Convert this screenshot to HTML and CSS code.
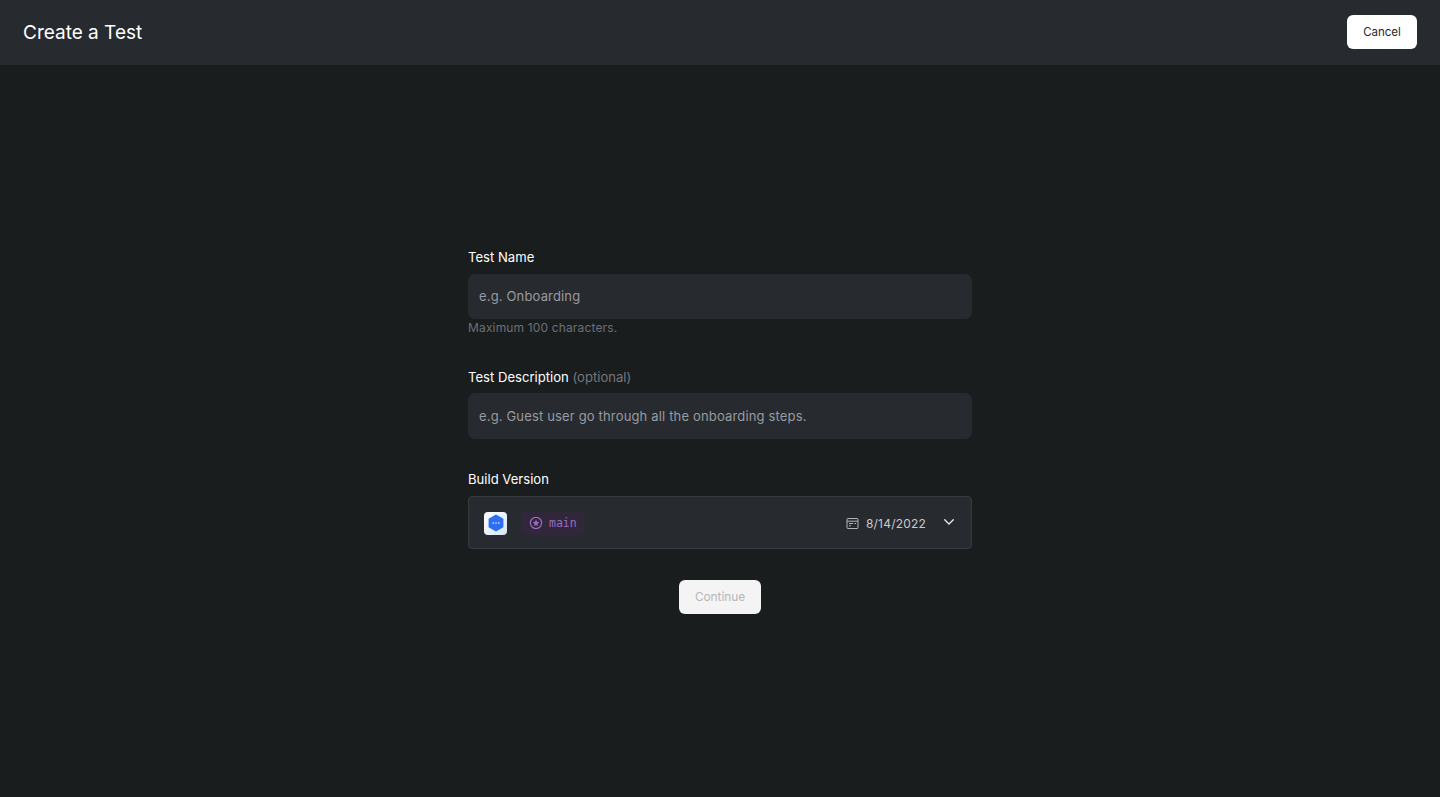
FILE: index.html
```html
<!DOCTYPE html>
<html lang="en">
<head>
<meta charset="utf-8">
<title>Create a Test</title>
<link rel="stylesheet" href="styles.css">
</head>
<body>
<header class="topbar">
  <h1 class="title">Create a Test</h1>
  <button class="btn" type="button">Cancel</button>
</header>
<main class="main">
  <form class="form">
    <div class="field first">
      <label class="label">Test Name</label>
      <div class="input short">e.g. Onboarding</div>
      <p class="hint">Maximum 100 characters.</p>
    </div>
    <div class="field second">
      <label class="label">Test Description <span class="opt">(optional)</span></label>
      <div class="input tall">e.g. Guest user go through all the onboarding steps.</div>
    </div>
    <div class="field third">
      <label class="label">Build Version</label>
      <div class="select">
        <span class="appicon">
          <svg width="16" height="18" viewBox="0 0 16 18"><path d="M8 0.5 15.4 4.7v8.6L8 17.5.6 13.3V4.7z" fill="#2b6ff7"/><circle cx="5.2" cy="9" r=".8" fill="#fff"/><circle cx="8" cy="9" r=".8" fill="#fff"/><circle cx="10.8" cy="9" r=".8" fill="#fff"/></svg>
        </span>
        <span class="branch">
          <svg width="14" height="14" viewBox="0 0 14 14"><circle cx="7" cy="7" r="5.6" fill="none" stroke="#9a6bc2" stroke-width="1.2"/><path d="M7 3.7l1 2.1 2.3.3-1.7 1.6.4 2.3L7 9l-2 1 .4-2.3-1.7-1.6 2.3-.3z" fill="#9a6bc2"/></svg>
          <span class="branchname">main</span>
        </span>
        <span class="date">
          <svg width="13" height="13" viewBox="0 0 13 13" fill="none" stroke="#b3b5b8" stroke-width="1"><rect x="1" y="1.5" width="11" height="10" rx="1"/><path d="M1 4.2h11M3 6.5h4M8.5 6.5H10M3 8.8h2"/></svg>
          8/14/2022
        </span>
        <svg class="chev" width="12" height="8" viewBox="0 0 12 8" fill="none" stroke="#e4e5e7" stroke-width="1.4" stroke-linecap="round" stroke-linejoin="round"><path d="M1.7 1.8 6 6l4.3-4.2"/></svg>
      </div>
    </div>
    <div class="actions">
      <button class="btn disabled" type="button">Continue</button>
    </div>
  </form>
</main>
</body>
</html>
```
FILE: styles.css
```css
* { box-sizing: border-box; }
html, body { margin: 0; height: 100%; }
body {
  background: #1a1d1e;
  font-family: Inter, "Liberation Sans", sans-serif;
  color: #fff;
}
.topbar {
  height: 65px;
  background: #272a2e;
  display: flex;
  align-items: center;
  justify-content: space-between;
  padding: 0 23px 2px;
}
.title { margin: 2px 0 0; font-size: 19px; line-height: 28px; font-weight: 400; }
.btn {
  width: 70px;
  height: 34px;
  padding: 0;
  border: 0;
  border-radius: 6px;
  background: #fff;
  color: #26282c;
  font: 400 11.5px/16px Inter, "Liberation Sans", sans-serif;
}
.btn.disabled { width: 82px; background: #f4f4f5; color: #b4b5b7; font-size: 11.8px; }
.main { display: flex; justify-content: center; padding-top: 183px; }
.form { width: 504px; }
.label { display: block; font-size: 13.1px; line-height: 18px; font-weight: 400; color: #fff; }
.opt { color: #74777c; font-size: 13.1px; }
.input {
  display: flex;
  align-items: center;
  padding: 0 11px;
  background: #272a2e;
  border-radius: 7px;
  color: #989ba1;
  font-size: 13px;
  letter-spacing: .16px;
}
.input.short { height: 45px; margin-top: 8px; padding-bottom: 1px; }
.input.tall { height: 46px; margin-top: 7px; }
.hint { margin: 0; padding-top: 1px; font-size: 12px; line-height: 16px; color: #6d7076; letter-spacing: .15px; }
.second { margin-top: 32px; }
.third { margin-top: 31px; }
.select {
  height: 53px;
  margin-top: 8px;
  padding: 1px 16px 0 15px;
  display: flex;
  align-items: center;
  background: #272a2e;
  border: 1px solid #383b40;
  border-radius: 4px;
}
.appicon {
  width: 23px;
  height: 23px;
  border-radius: 4px;
  background: linear-gradient(135deg, #fff, #d5e4fb);
  display: flex;
  align-items: center;
  justify-content: center;
}
.branch {
  margin-left: 14px;
  height: 23px;
  padding: 0 7px 0 8px;
  display: flex;
  align-items: center;
  gap: 6px;
  background: #30273b;
  border-radius: 2px;
}
.branchname { font: 11.5px/16px "DejaVu Sans Mono", "Liberation Mono", monospace; color: #9a6bc2; }
.date {
  margin-left: auto;
  display: flex;
  align-items: center;
  gap: 7px;
  font-size: 12px;
  letter-spacing: .2px;
  color: #c9cacc;
}
.chev { margin-left: 17px; margin-top: -3px; }
.actions { display: flex; justify-content: center; margin-top: 31px; }
```
